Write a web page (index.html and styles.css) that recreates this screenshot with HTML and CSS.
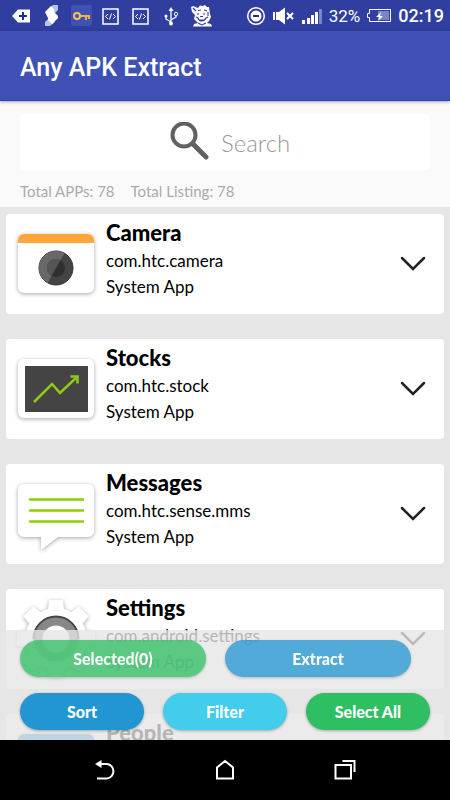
FILE: index.html
```html
<!DOCTYPE html>
<html lang="en">
<head>
<meta charset="utf-8">
<meta name="viewport" content="width=device-width, initial-scale=1">
<title>Any APK Extract</title>
<link rel="stylesheet" href="styles.css">
</head>
<body>
<div class="status">
  <div class="status-icons">
    <svg width="24" height="24" viewBox="0 0 24 24"><path d="M2 12 8 5.500H20V18.500H8Z" fill="#fff"/><path d="M13 8v8M9 12h8" stroke="#202c96" stroke-width="2"/></svg>
    <svg width="24" height="24" viewBox="0 0 24 24"><path d="M7 6 13 1H18V6L13 11ZM5 18 10 13 15 18 10 22H5Z" fill="#bcc1e6"/><path d="M5 8 11 2 14 5V8L18 12V14L12 20 8 16V14Z" fill="#fff"/></svg>
    <svg width="24" height="24" viewBox="0 0 24 24"><rect x="1" y="1" width="21" height="21" rx="3" fill="#3f51b5"/><path d="M9 12H20M16 12v4M19 12v3" stroke="#f0b43c" stroke-width="2"/><circle cx="7" cy="12" r="3" fill="none" stroke="#f6c45c" stroke-width="2"/></svg>
    <svg width="24" height="24" viewBox="0 0 24 24"><rect x="3" y="5" width="15" height="15" fill="none" stroke="#fff" stroke-width="1.500"/><path d="m8 10-2.500 2.500L8 15m5-5 2.500 2.500L13 15M11.500 9.500l-2 6" fill="none" stroke="#fff"/></svg>
    <svg width="24" height="24" viewBox="0 0 24 24"><rect x="3" y="5" width="15" height="15" fill="none" stroke="#fff" stroke-width="1.500"/><path d="m8 10-2.500 2.500L8 15m5-5 2.500 2.500L13 15M11.500 9.500l-2 6" fill="none" stroke="#fff"/></svg>
    <svg width="24" height="24" viewBox="0 0 24 24"><path d="M11 6V20M11 18 6 15V12M11 16l5-3v-2" fill="none" stroke="#fff" stroke-width="1.300"/><path d="M11 3l2.500 4h-5Z" fill="#fff"/><circle cx="11" cy="19.500" r="2" fill="#fff"/><circle cx="6" cy="12" r="1.500" fill="#fff"/><circle cx="16" cy="10" r="1.700" fill="none" stroke="#fff"/></svg>
    <svg width="24" height="24" viewBox="0 0 24 24"><path d="M1 3 3 2 8 4 10 1.500 13 2 15 1 17 3 19 3 20 10 21 13 19 17 17 19 21 20 22 22.500H3L4 20 8 19 4 15 5 11 2 8Z" fill="#fff"/><path d="M3 4 6 7M8 6.500 11 6M14 6l3 1M8 9v2M14 9v2M18 8v4M10 12.500h3M6 13l2 1c1 4 6 4 8 0l2-1M10 16h4M8 19l4 2 4-2" fill="none" stroke="#303f9f" stroke-width="1.100"/></svg>
  </div>
  <div class="status-info">
    <svg width="22" height="22" viewBox="0 0 22 22"><circle cx="11" cy="11" r="8.300" fill="none" stroke="#fff" stroke-width="1.500"/><circle cx="11" cy="11" r="5.500" fill="#fff"/><path d="M8 11h6" stroke="#202c96" stroke-width="2"/></svg>
    <svg width="22" height="22" viewBox="0 0 22 22"><path d="M0 7H2V15H0ZM3 7H6L12 2.500V19.500L6 15H3Z" fill="#fff"/><path d="m14 8 6 6m0-6-6 6" stroke="#fff" stroke-width="2"/></svg>
    <svg width="22" height="22" viewBox="0 0 22 22"><path d="M1 15h3v4H1ZM6 13h3v6H6ZM10 10h3v9H10ZM14 7h3v12h-3Z" fill="#fff"/><path d="M18 4h3v15h-3Z" fill="#7a84c8"/></svg>
    <span class="percent">32%</span>
    <svg width="26" height="22" viewBox="0 0 26 22"><path d="M12 6h11v9H12Z" fill="#7983c6"/><path d="M3.500 4.500h21v12h-21v-4h-2v-4h2Z" fill="none" stroke="#fff"/><path d="m15 7-5 5h3l-1 4 5-5h-3Z" fill="#fff"/></svg>
    <span class="clock">02:19</span>
  </div>
</div>
<header class="appbar"><h1>Any APK Extract</h1></header>
<section class="tools">
  <label class="search">
    <svg width="40" height="40" viewBox="0 0 40 40"><circle cx="15" cy="13" r="11.500" fill="none" stroke="#616161" stroke-width="4"/><path d="m24 22 13 13" stroke="#616161" stroke-width="5" stroke-linecap="round"/></svg>
    <input type="text" placeholder="Search" aria-label="Search">
  </label>
  <p class="totals"><span>Total APPs: 78</span><span>Total Listing: 78</span></p>
</section>
<main class="content">
  <ul class="list">
    <li class="card">
      <svg class="icon" width="84" height="84" viewBox="0 0 84 84"><rect x="5" y="12" width="76" height="59" rx="6" fill="#fff"/><path d="M5 21V18a6 6 0 0 1 6-6H75a6 6 0 0 1 6 6v3Z" fill="#ffa53a"/><circle cx="43" cy="46" r="17" fill="#444" stroke="#333"/><path d="M34.500 61A17 17 0 0 1 51.500 31Z" fill="#686868"/><circle cx="43" cy="46" r="9" fill="#303030"/><path d="M38.500 54A9 9 0 0 1 47.500 38Z" fill="#565656"/></svg>
      <div class="info"><h2>Camera</h2><p>com.htc.camera</p><p>System App</p></div>
      <button class="more" aria-label="Camera details"><svg width="26" height="16" viewBox="0 0 26 16"><path d="m2 2 11 11L24 2" fill="none" stroke="#222" stroke-width="2.500" stroke-linecap="round"/></svg></button>
    </li>
    <li class="card">
      <svg class="icon" width="84" height="84" viewBox="0 0 84 84"><rect x="5" y="12" width="76" height="59" rx="6" fill="#fff"/><rect x="12" y="19" width="63" height="46" fill="#444"/><path d="m21 55 18-18 8 9 17-16" fill="none" stroke="#8fcb14" stroke-width="2.500"/><path d="M57.500 29.500H64.500V36.500" fill="none" stroke="#8fcb14" stroke-width="2.500"/></svg>
      <div class="info"><h2>Stocks</h2><p>com.htc.stock</p><p>System App</p></div>
      <button class="more" aria-label="Stocks details"><svg width="26" height="16" viewBox="0 0 26 16"><path d="m2 2 11 11L24 2" fill="none" stroke="#222" stroke-width="2.500" stroke-linecap="round"/></svg></button>
    </li>
    <li class="card">
      <svg class="icon" width="84" height="84" viewBox="0 0 84 84"><path d="M11 12H75a6 6 0 0 1 6 6V59a6 6 0 0 1-6 6H45L28 78V65H11a6 6 0 0 1-6-6V18a6 6 0 0 1 6-6Z" fill="#fff"/><path d="M17 27.500H70M17 38.500H70M17 49.500H70" stroke="#8fce00" stroke-width="2.500" stroke-linecap="round"/></svg>
      <div class="info"><h2>Messages</h2><p>com.htc.sense.mms</p><p>System App</p></div>
      <button class="more" aria-label="Messages details"><svg width="26" height="16" viewBox="0 0 26 16"><path d="m2 2 11 11L24 2" fill="none" stroke="#222" stroke-width="2.500" stroke-linecap="round"/></svg></button>
    </li>
    <li class="card">
      <svg class="icon" width="84" height="84" viewBox="0 0 84 84"><g fill="#fff"><circle cx="43" cy="42" r="31"/><path id="tooth" d="M35 12 36 3H50L51 12V72L50 81H36L35 72Z"/><use href="#tooth" transform="rotate(45 43 42)"/><use href="#tooth" transform="rotate(90 43 42)"/><use href="#tooth" transform="rotate(135 43 42)"/></g><circle cx="43" cy="42" r="18" fill="none" stroke="#888" stroke-width="9"/><path d="M20.500 42a22.500 22.500 0 0 1 45 0" fill="none" stroke="#444" stroke-width="2"/></svg>
      <div class="info"><h2>Settings</h2><p>com.android.settings</p><p>System App</p></div>
      <button class="more" aria-label="Settings details"><svg width="26" height="16" viewBox="0 0 26 16"><path d="m2 2 11 11L24 2" fill="none" stroke="#222" stroke-width="2.500" stroke-linecap="round"/></svg></button>
    </li>
    <li class="card">
      <svg class="icon" width="84" height="84" viewBox="0 0 84 84"><rect x="5" y="12" width="76" height="59" rx="6" fill="#2497d3"/></svg>
      <div class="info"><h2>People</h2></div>
    </li>
  </ul>
  <div class="panel">
    <div class="row primary"><button class="pill green">Selected(0)</button><button class="pill blue">Extract</button></div>
    <div class="row"><button class="pill blue">Sort</button><button class="pill cyan">Filter</button><button class="pill green">Select All</button></div>
  </div>
</main>
<nav class="navbar">
  <button aria-label="Back"><svg width="24" height="24" viewBox="0 0 24 24"><path d="M5 6h9a7.300 7.300 0 0 1 0 14.500H4" fill="none" stroke="#fff" stroke-width="2"/><path d="M2 6 8.500 2v8Z" fill="#fff"/></svg></button>
  <button aria-label="Home"><svg width="24" height="24" viewBox="0 0 24 24"><path d="M4 20.500V9.500L12 3l8 6.500v11Z" fill="none" stroke="#fff" stroke-width="2"/></svg></button>
  <button aria-label="Recent apps"><svg width="24" height="24" viewBox="0 0 24 24"><path d="M2.500 7H18v13.500H2.500Z" fill="none" stroke="#fff" stroke-width="2"/><path d="M9.500 3h12v11" fill="none" stroke="#fff" stroke-width="2"/></svg></button>
</nav>
</body>
</html>
```
FILE: styles.css
```css
* { box-sizing: border-box; }
body {
  margin: 0;
  height: 100vh;
  display: flex;
  flex-direction: column;
  overflow: hidden;
  background: #fafafa;
  font-family: Lato, "Open Sans", sans-serif;
}
h1, h2, p, ul { margin: 0; padding: 0; }
button { border: 0; padding: 0; background: none; font-family: inherit; }
svg { display: block; flex: none; }

.status {
  flex: none;
  height: 31px;
  padding: 0 6px 0 10px;
  display: flex;
  align-items: center;
  justify-content: space-between;
  background: #303f9f;
  color: #fff;
  font-family: Roboto, sans-serif;
}
.status-icons { display: flex; gap: 6px; }
.status-info { display: flex; align-items: center; gap: 6px; }
.percent { font-size: 17px; }
.clock { font-size: 18px; font-weight: 500; }

.appbar {
  flex: none;
  height: 70px;
  padding: 4px 20px 0;
  display: flex;
  align-items: center;
  background: #3f51b5;
  border-bottom: 1px solid #2742b8;
  box-shadow: 0 1px 3px rgba(0, 0, 0, .35);
}
.appbar h1 {
  color: #fff;
  font: 500 25px Roboto, sans-serif;
}

.tools { flex: none; padding: 13px 20px 4px; }
.search {
  height: 56px;
  padding-left: 12px;
  display: flex;
  align-items: center;
  justify-content: center;
  gap: 12px;
  border-radius: 4px;
  background: #fff;
}
.search input {
  width: 72px;
  padding: 0;
  border: 0;
  outline: 0;
  background: none;
  font: 300 24px Lato, sans-serif;
}
.search input::placeholder { color: #999; opacity: 1; }
.totals {
  margin-top: 9px;
  display: flex;
  gap: 16px;
  color: #aaa;
  font-size: 15px;
  line-height: 24px;
}

.content {
  flex: 1;
  min-height: 0;
  position: relative;
  overflow: hidden;
  background: #e6e6e6;
}
.list {
  list-style: none;
  padding: 7px 6px;
  display: flex;
  flex-direction: column;
  gap: 25px;
}
.card {
  height: 100px;
  padding: 0 18px 0 7px;
  display: flex;
  align-items: center;
  border-radius: 4px;
  background: #fff;
}
.icon { filter: drop-shadow(0 1px 2px rgba(0, 0, 0, .35)); }
.info {
  flex: 1;
  align-self: flex-start;
  padding: 4px 0 0 9px;
}
.info h2 { font-size: 22px; font-weight: 900; line-height: 30px; }
.info p { font-size: 17px; line-height: 26px; }

.panel {
  position: absolute;
  left: 0;
  right: 0;
  bottom: 0;
  padding: 10px 20px;
  display: flex;
  flex-direction: column;
  gap: 16px;
  background: rgba(229, 229, 229, .79);
}
.row { display: flex; gap: 19px; }
.primary { padding-right: 19px; }
.primary .pill { opacity: .76; }
.pill {
  flex: 1;
  height: 37px;
  border-radius: 19px;
  color: #fff;
  font-size: 16px;
  font-weight: 900;
  box-shadow: 0 1px 3px rgba(0, 0, 0, .3);
}
.green { background: #2ebf62; }
.blue { background: #2196d3; }
.cyan { background: #43cdec; }

.navbar {
  flex: none;
  height: 60px;
  padding: 0 45px;
  display: flex;
  background: #000;
}
.navbar button { flex: 1; display: flex; align-items: center; justify-content: center; }
```
